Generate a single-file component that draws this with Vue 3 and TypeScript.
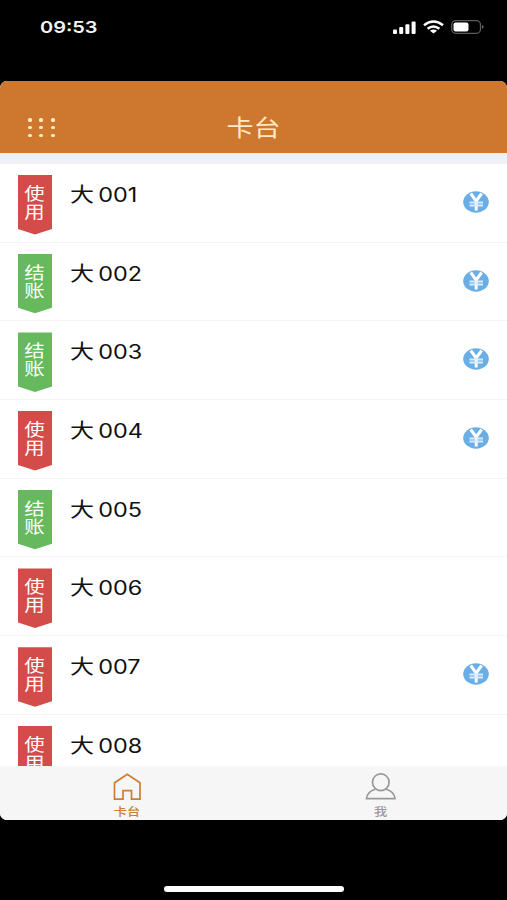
<script setup lang="ts">
interface Desk {
  id: string
  status: 'use' | 'settle'
  paid: boolean
}

const desks: Desk[] = [
  { id: '001', status: 'use', paid: true },
  { id: '002', status: 'settle', paid: true },
  { id: '003', status: 'settle', paid: true },
  { id: '004', status: 'use', paid: true },
  { id: '005', status: 'settle', paid: false },
  { id: '006', status: 'use', paid: false },
  { id: '007', status: 'use', paid: true },
  { id: '008', status: 'use', paid: false },
]

const statusText: Record<Desk['status'], string[]> = {
  use: ['使', '用'],
  settle: ['结', '账'],
}
const dots = [0, 1, 2, 3, 4, 5, 6, 7, 8]
</script>

<template>
  <div class="phone">
    <div class="status-bar">
      <span class="clock">09:53</span>
      <div class="indicators">
        <svg class="signal" width="23" height="13" viewBox="0 0 23 13" fill="#fff">
          <rect x="0" y="8.500" width="4" height="4.500" rx="1" />
          <rect x="6.200" y="6" width="4" height="7" rx="1" />
          <rect x="12.400" y="3.200" width="4" height="9.800" rx="1" />
          <rect x="18.600" y="0.500" width="4" height="12.500" rx="1" />
        </svg>
        <svg class="wifi" width="21" height="14" viewBox="0 0 21 14" fill="none" stroke="#fff" stroke-width="2.500">
          <path d="M1 5.200Q10.500-2.200 20 5.200" />
          <path d="M4.600 8.800Q10.500 4.200 16.400 8.800" />
          <path d="M7 10.800Q10.500 8.100 14 10.800L10.500 13.600Z" fill="#fff" stroke="none" />
        </svg>
        <svg class="battery" width="34" height="14" viewBox="0 0 34 14">
          <rect x=".7" y=".7" width="28.800" height="12.600" rx="4" fill="none" stroke="#5c5c5c" stroke-width="1.300" />
          <rect x="2.500" y="2.500" width="15" height="9" rx="2" fill="#fff" />
          <path d="M31 5Q34.500 7 31 9Z" fill="#666" />
        </svg>
      </div>
    </div>

    <main class="app">
      <header class="header">
        <div class="menu"><i v-for="d in dots" :key="d" /></div>
        <h1>卡台</h1>
      </header>
      <ul class="list">
        <li v-for="desk in desks" :key="desk.id" class="row">
          <div class="ribbon" :class="desk.status">
            <span v-for="c in statusText[desk.status]" :key="c">{{ c }}</span>
          </div>
          <div class="name"><span class="size">大</span><span class="number">{{ desk.id }}</span></div>
          <svg v-if="desk.paid" class="yen" width="26" height="22" viewBox="0 0 26 22">
            <ellipse cx="13" cy="11" rx="12.800" ry="10.700" fill="#6aaee6" />
            <path d="M7.700 2.500L13.200 10L18.700 2.500M13.200 9.500V19.500" fill="none" stroke="#fff" stroke-width="3" />
            <path d="M6.500 11.600H20M6.500 14.600H20" stroke="#d9ecfb" stroke-width="2" />
          </svg>
        </li>
      </ul>
      <nav class="tabs">
        <div class="tab active">
          <svg width="30" height="29" viewBox="0 0 30 29" fill="none" stroke="currentColor" stroke-width="1.700">
            <path d="M2.500 10.800L15.300 2.200L28 10.800V27.200H19.500V18.700H11V27.200H2.500Z" />
          </svg>
          <span>卡台</span>
        </div>
        <div class="tab me">
          <svg width="32" height="29" viewBox="0 0 32 29" fill="none" stroke="currentColor" stroke-width="1.700">
            <ellipse cx="16.800" cy="10.200" rx="8.300" ry="8.400" />
            <path d="M11.500 17.200C6.500 18.500 3 21.800 2.500 26.600H31C30.500 21.800 27 18.500 22 17.200" />
          </svg>
          <span>我</span>
        </div>
      </nav>
    </main>
    <div class="home-area"><div class="home-bar" /></div>
  </div>
</template>

<style>
body {
  margin: 0;
  background: #000;
}
</style>

<style scoped>
.phone {
  width: 507px;
  height: 900px;
  background: #000;
  overflow: hidden;
  display: flex;
  flex-direction: column;
  font-family: Inter, "Noto Sans CJK SC", sans-serif;
}
.status-bar {
  height: 81px;
  flex: none;
  box-sizing: border-box;
  padding: 17px 22px 0 40px;
  display: flex;
  justify-content: space-between;
  align-items: flex-start;
}
.clock {
  color: #f4f4f4;
  font-size: 16.500px;
  line-height: 21px;
  font-weight: 600;
  transform: scaleX(1.210);
  transform-origin: left;
}
.indicators {
  display: flex;
  align-items: center;
  gap: 7px;
  padding-top: 3px;
}
.app {
  height: 739px;
  flex: none;
  border-radius: 7px;
  overflow: hidden;
  background: #fff;
  display: flex;
  flex-direction: column;
}
.header {
  height: 72px;
  flex: none;
  box-sizing: border-box;
  background: #cd782e;
  padding: 31px 27px 0;
  display: grid;
  grid-template-columns: 30px 1fr 30px;
}
.menu {
  display: grid;
  grid-template-columns: repeat(3, 4px);
  grid-auto-rows: 3.500px;
  gap: 4.300px 7.300px;
  align-content: start;
  padding: 6px 0 0 1px;
}
.menu i {
  background: #ffe9c3;
  border-radius: 1.500px;
}
h1 {
  margin: 0;
  color: #ffe9c8;
  font-size: 22.500px;
  line-height: 32px;
  font-weight: 400;
  text-align: center;
  transform: scaleX(1.200);
}
.list {
  list-style: none;
  margin: 0;
  padding: 0;
  height: 602px;
  flex: none;
  border-top: 11px solid #efeff4;
  overflow: hidden;
}
.row {
  height: 78.700px;
  box-sizing: border-box;
  border-bottom: 1px solid #f3f3f3;
  padding: 11px 18px 0;
  display: flex;
  align-items: flex-start;
}
.ribbon {
  width: 34px;
  height: 59.500px;
  flex: none;
  box-sizing: border-box;
  padding: 10px 1px 0 0;
  color: #fff;
  font-size: 17px;
  line-height: 18px;
  display: flex;
  flex-direction: column;
  align-items: center;
  clip-path: polygon(0 0, 100% 0, 100% 54px, 50% 100%, 0 54px);
}
.ribbon span {
  transform: scaleX(1.200);
}
.use {
  background: #d34c4a;
}
.settle {
  background: #66b95d;
}
.name {
  margin-left: 17.500px;
  color: #111;
  font-size: 20px;
  line-height: 40px;
  display: flex;
  transform: scaleX(1.200);
  transform-origin: left;
}
.number {
  margin-left: 3.500px;
  font-size: 19.500px;
}
.yen {
  margin: 16px 0 0 auto;
}
.tabs {
  flex: 1;
  background: #f6f6f6;
  display: grid;
  grid-template-columns: 1fr 1fr;
}
.tab {
  display: flex;
  flex-direction: column;
  align-items: center;
  padding-top: 6px;
  color: #999;
}
.tab.active {
  color: #cd7d34;
}
.tab span {
  font-size: 11px;
  line-height: 16px;
  font-weight: 500;
  margin-top: 3px;
  transform: scaleX(1.200);
}
.home-area {
  flex: 1;
  display: flex;
  justify-content: center;
  padding-top: 66px;
}
.home-bar {
  width: 180px;
  height: 6px;
  border-radius: 3px;
  background: #fff;
}
</style>
